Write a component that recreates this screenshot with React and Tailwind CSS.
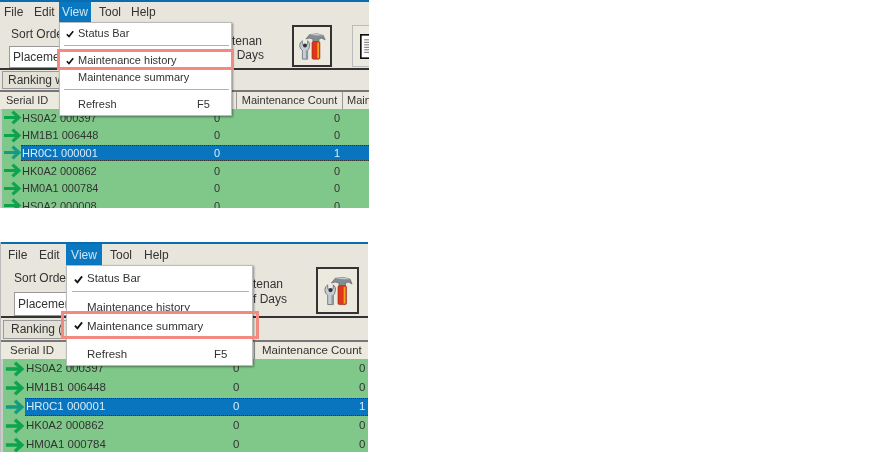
const rows = [
  { id: "HS0A2 000397", a: 0, b: 0 },
  { id: "HM1B1 006448", a: 0, b: 0 },
  { id: "HR0C1 000001", a: 0, b: 1, selected: true },
  { id: "HK0A2 000862", a: 0, b: 0 },
  { id: "HM0A1 000784", a: 0, b: 0 },
  { id: "HS0A2 000008", a: 0, b: 0 },
];

function ToolsIcon({ className }) {
  return (
    <svg viewBox="0 0 32 32" className={className}>
      {/* hammer head */}
      <path d="M9 8 L13 3 L22 2 L29 4 L31 9 L27 7 L24 8 L24 11 L17 11 L17 8 L13 7 Z" fill="#858d94" stroke="#50565c" strokeWidth="0.6" />
      <path d="M13 3 L22 2 L29 4 L22 4 Z" fill="#c4cbd1" />
      {/* handle */}
      <rect x="16" y="11" width="9" height="20" rx="1.5" fill="#e2361c" stroke="#8f2a14" strokeWidth="0.7" />
      <rect x="22" y="12" width="2" height="18" fill="#f2a51e" />
      {/* wrench */}
      <path d="M2 16 A6 6 0 0 1 5 10 L5 14 L8 16 L11 14 L11 10 A6 6 0 0 1 13 17 A6 6 0 0 1 11 21 L11 31 L5 31 L5 21 A6 6 0 0 1 2 16 Z" fill="#c6ced4" stroke="#59616a" strokeWidth="0.8" />
      <circle cx="8" cy="15.5" r="2.3" fill="#30363d" />
      <rect x="9" y="21" width="2" height="10" fill="#8e979f" />
    </svg>
  );
}

function PageIcon({ className }) {
  return (
    <svg viewBox="0 0 24 30" className={className}>
      <rect x="1" y="1" width="22" height="28" fill="#fff" stroke="#111" strokeWidth="2" />
      <path d="M5 7H19M5 10H19M5 13H19M5 16H19M5 19H19M5 22H19" stroke="#555" strokeWidth="1" />
    </svg>
  );
}

function Arrow({ className }) {
  return (
    <svg viewBox="0 0 16 14" className={className}>
      <path d="M0 7H13M8 1.5L14 7L8 12.5" fill="none" stroke="currentColor" strokeWidth="3" />
    </svg>
  );
}

function Check({ className }) {
  return (
    <svg viewBox="0 0 8 8" className={className}>
      <path d="M0.8 4.2L3 6.5L7.2 1.2" fill="none" stroke="#111" strokeWidth="1.6" />
    </svg>
  );
}

function TopPanel() {
  return (
    <div className="relative w-[369px] h-[208px] overflow-hidden bg-[#e8e5dc] text-[11px] text-[#333] blur-[0.3px]">
      <div className="h-[2px] bg-[#0a6cb0]" />
      <div className="flex h-[20px] bg-[#e8e5dc] pl-[1px] text-[12px]">
        <span className="flex items-center px-[3px] w-[30px]">File</span>
        <span className="flex items-center px-[3px] w-[28px]">Edit</span>
        <span className="flex items-center justify-center w-[32px] bg-[#0a78c0] text-[#cfe6f5]">View</span>
        <span className="flex items-center pl-[8px] w-[39px]">Tool</span>
        <span className="flex items-center pl-[1px]">Help</span>
      </div>
      <div className="flex h-[48px] border-b-2 border-[#333] pl-[11px] text-[12px]">
        <div className="w-[219px] shrink-0 pt-[5px] whitespace-nowrap">
          <div className="leading-[14px]">Sort Order</div>
          <div className="mt-[5px] h-[22px] w-[60px] -ml-[2px] border border-[#999] bg-white pl-[3px] leading-[20px] overflow-hidden">Placement</div>
        </div>
        <div className="w-[32px] shrink-0 pt-[12px] leading-[14px] text-right whitespace-nowrap">
          <div>tenan</div>
          <div>f Days</div>
        </div>
        <div className="ml-[30px] shrink-0 mt-[3px] w-[40px] h-[42px] border-2 border-[#333] bg-[#ece9df] flex items-center justify-center">
          <ToolsIcon className="w-[28px] h-[32px]" />
        </div>
        <div className="ml-[20px] shrink-0 mt-[3px] w-[30px] h-[42px] border border-[#bbb] bg-[#ece9df] flex items-center pl-[7px]">
          <PageIcon className="w-[20px] h-[27px] shrink-0" />
        </div>
      </div>
      <div className="h-[20px] pl-[2px] pt-[1px] text-[12px]">
        <div className="w-[70px] h-[18px] border border-[#999] bg-[#e3e0d5] pl-[5px] leading-[16px] whitespace-nowrap overflow-hidden">Ranking w</div>
      </div>
      <div className="grid grid-cols-[236px_106px_27px] h-[19px] border-t-2 border-[#777] bg-[#ece9df] pl-[1px] leading-[17px]">
        <div className="pl-[5px] border-r border-[#999]">Serial ID</div>
        <div className="text-center border-r border-[#999] whitespace-nowrap">Maintenance Count</div>
        <div className="pl-[4px] overflow-hidden">Main</div>
      </div>
      <div className="h-[99px] bg-[#80c78a] border-l-2 border-[#ccc] overflow-hidden">
        {rows.map((r) => (
          <div key={r.id} className="flex h-[17.6px] items-center leading-[14px]">
            <Arrow className={r.selected ? "ml-[2px] w-[17px] h-[15px] shrink-0 text-[#169a82]" : "ml-[2px] w-[17px] h-[15px] shrink-0 text-[#10a34f]"} />
            <div className={r.selected ? "flex flex-1 h-[16px] items-center bg-[#0a75bf] text-[#d8ecf8] border-y border-dotted border-[#333]" : "flex flex-1 items-center"}>
              <span className="w-[193px] shrink-0 pl-[1px]">{r.id}</span>
              <span className="w-[120px] shrink-0">{r.a}</span>
              <span>{r.b}</span>
            </div>
          </div>
        ))}
      </div>
      <div className="absolute left-[59px] top-[22px] w-[173px] h-[94px] bg-white border border-[#bbb] shadow-[1px_1px_2px_rgba(0,0,0,0.4)] pl-[18px]">
        <div className="h-[22px] leading-[21px]">Status Bar</div>
        <div className="h-[1px] bg-[#b5b2a8] -ml-[14px] mr-[2px]" />
        <div className="mt-[6px] h-[17px] leading-[16px]">Maintenance history</div>
        <div className="h-[17px] leading-[17px]">Maintenance summary</div>
        <div className="mt-[3px] h-[1px] bg-[#b5b2a8] -ml-[14px] mr-[2px]" />
        <div className="mt-[6px] flex leading-[16px]"><span className="w-[119px]">Refresh</span><span>F5</span></div>
        <Check className="absolute left-[6px] top-[7px] w-[8px] h-[8px]" />
        <Check className="absolute left-[6px] top-[34px] w-[8px] h-[8px]" />
      </div>
      <div className="absolute left-[57px] top-[49px] w-[177px] h-[21px] border-[3px] border-[#f28a80]" />
    </div>
  );
}

function BottomPanel() {
  return (
    <div className="relative mt-[34px] w-[368px] h-[210px] overflow-hidden bg-[#e8e5dc] text-[11.5px] text-[#333] border-l border-[#bbb] blur-[0.3px]">
      <div className="h-[2px] bg-[#0a6cb0]" />
      <div className="flex h-[21px] bg-[#e8e5dc] pl-[7px] text-[12px]">
        <span className="flex items-center w-[31px]">File</span>
        <span className="flex items-center w-[27px]">Edit</span>
        <span className="flex items-center justify-center w-[36px] bg-[#0a78c0] text-[#cfe6f5]">View</span>
        <span className="flex items-center pl-[8px] w-[42px]">Tool</span>
        <span className="flex items-center">Help</span>
      </div>
      <div className="flex h-[53px] border-b-2 border-[#333] pl-[13px] text-[12px]">
        <div className="w-[222px] shrink-0 pt-[6px] whitespace-nowrap">
          <div className="leading-[15px]">Sort Order</div>
          <div className="mt-[6px] h-[24px] w-[58px] border border-[#999] bg-white pl-[3px] leading-[22px] overflow-hidden">Placement</div>
        </div>
        <div className="w-[80px] shrink-0 pt-[12px] pl-[17px] leading-[15px] whitespace-nowrap">
          <div>tenan</div>
          <div>f Days</div>
        </div>
        <div className="mt-[2px] shrink-0 w-[43px] h-[47px] border-2 border-[#333] bg-[#ece9df] flex items-center justify-center">
          <ToolsIcon className="w-[30px] h-[35px]" />
        </div>
      </div>
      <div className="h-[22px] pl-[2px] pt-[2px] text-[12px]">
        <div className="w-[70px] h-[19px] border border-[#999] bg-[#e3e0d5] pl-[7px] leading-[17px] whitespace-nowrap overflow-hidden">Ranking (</div>
      </div>
      <div className="grid grid-cols-[252px_114px] h-[19px] border-t-2 border-[#777] bg-[#ece9df] pl-[1px] leading-[17px]">
        <div className="pl-[8px]">Serial ID</div>
        <div className="pl-[7px] border-l border-[#999] whitespace-nowrap">Maintenance Count</div>
      </div>
      <div className="h-[93px] bg-[#80c78a] border-l-2 border-[#ccc] overflow-hidden">
        {rows.slice(0, 5).map((r) => (
          <div key={r.id} className="flex h-[19px] items-center leading-[15px]">
            <Arrow className={r.selected ? "ml-[2px] w-[20px] h-[16px] shrink-0 text-[#169a82]" : "ml-[2px] w-[20px] h-[16px] shrink-0 text-[#10a34f]"} />
            <div className={r.selected ? "flex flex-1 h-[18px] items-center bg-[#0a75bf] text-[#d8ecf8] border-y border-dotted border-[#333]" : "flex flex-1 items-center"}>
              <span className="w-[208px] shrink-0 pl-[1px]">{r.id}</span>
              <span className="w-[126px] shrink-0">{r.a}</span>
              <span>{r.b}</span>
            </div>
          </div>
        ))}
      </div>
      <div className="absolute left-[65px] top-[23px] w-[187px] h-[101px] bg-white border border-[#bbb] shadow-[1px_1px_2px_rgba(0,0,0,0.4)] pl-[20px]">
        <div className="h-[25px] leading-[24px]">Status Bar</div>
        <div className="h-[1px] bg-[#b5b2a8] -ml-[15px] mr-[3px]" />
        <div className="mt-[6px] h-[19px] leading-[18px]">Maintenance history</div>
        <div className="h-[19px] leading-[19px]">Maintenance summary</div>
        <div className="mt-[3px] flex leading-[30px]"><span className="w-[127px]">Refresh</span><span>F5</span></div>
        <Check className="absolute left-[7px] top-[9px] w-[9px] h-[9px]" />
        <Check className="absolute left-[7px] top-[55px] w-[9px] h-[9px]" />
      </div>
      <div className="absolute left-[60px] top-[69px] w-[198px] h-[28px] border-[3px] border-[#f28a80]" />
    </div>
  );
}

export default function App() {
  return (
    <div className="w-[882px] h-[467px] bg-white font-['Liberation_Sans',sans-serif]">
      <TopPanel />
      <BottomPanel />
    </div>
  );
}
